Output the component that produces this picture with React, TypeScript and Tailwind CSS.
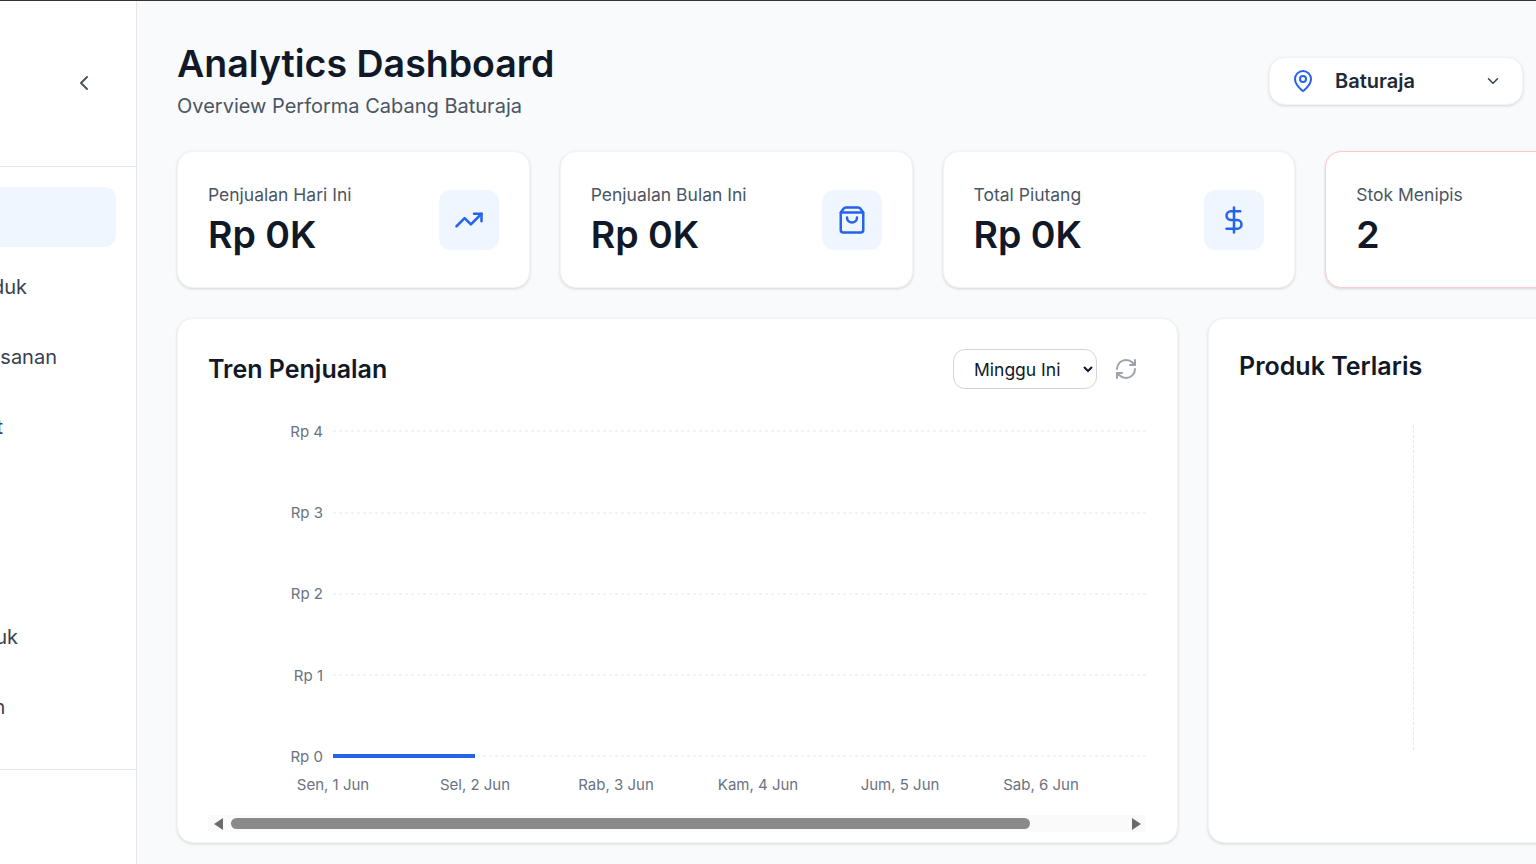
import {
  ChevronDown,
  ChevronLeft,
  DollarSign,
  MapPin,
  RefreshCw,
  ShoppingBag,
  TrendingUp,
} from "lucide-react";
import type { ReactNode } from "react";

function StatCard({
  label,
  value,
  icon,
  alert,
}: {
  label: string;
  value: string;
  icon?: ReactNode;
  alert?: boolean;
}) {
  return (
    <div
      className={`flex h-[137px] w-[352.75px] shrink-0 items-center justify-between rounded-2xl border bg-white px-[30px] shadow-[0_1px_3px_rgba(0,0,0,0.15)] ${
        alert ? "border-red-200" : "border-gray-100"
      }`}
    >
      <div>
        <div className="text-[17.5px] leading-[24px] text-[#4b5563]">{label}</div>
        <div className="mt-[6px] text-[37.5px] leading-[44px] font-semibold text-[#111827]">
          {value}
        </div>
      </div>
      {icon && (
        <div className="flex h-[60px] w-[60px] items-center justify-center rounded-xl bg-[#eff6ff] text-[#2563eb]">
          {icon}
        </div>
      )}
    </div>
  );
}

function NavRow({ label, className }: { label?: string; className?: string }) {
  return (
    <div className="flex h-[60px] shrink-0 items-center">
      {label && (
        <span className={`text-[20px] whitespace-nowrap text-[#374151] ${className}`}>
          {label}
        </span>
      )}
    </div>
  );
}

const yTicks = [
  { y: 11, textY: 16.5, label: "Rp 4" },
  { y: 93, textY: 98, label: "Rp 3" },
  { y: 174, textY: 179, label: "Rp 2" },
  { y: 255, textY: 260.5, label: "Rp 1" },
  { y: 336, textY: 341.5, label: "Rp 0" },
];

const xTicks = [
  { x: 125, label: "Sen, 1 Jun" },
  { x: 267, label: "Sel, 2 Jun" },
  { x: 408, label: "Rab, 3 Jun" },
  { x: 550, label: "Kam, 4 Jun" },
  { x: 692, label: "Jum, 5 Jun" },
  { x: 833, label: "Sab, 6 Jun" },
];

function SalesChart() {
  return (
    <svg width="940" height="385" className="block" fontFamily="Inter, sans-serif">
      {yTicks.map((t) => (
        <g key={t.label}>
          <line x1="125" x2="940" y1={t.y} y2={t.y} stroke="#e5e7eb" strokeDasharray="3 3" />
          <text x="115" y={t.textY} textAnchor="end" fontSize="15" fill="#6b7280">
            {t.label}
          </text>
        </g>
      ))}
      {xTicks.map((t) => (
        <text key={t.label} x={t.x} y="370" textAnchor="middle" fontSize="15" fill="#6b7280">
          {t.label}
        </text>
      ))}
      <line x1="125" x2="267" y1="336" y2="336" stroke="#2563eb" strokeWidth="4" />
    </svg>
  );
}

export default function App() {
  return (
    <div className="flex h-screen w-screen overflow-hidden border-t border-[#333] bg-[#f9fafb] font-['Inter',sans-serif]">
      {/* sidebar is pushed mostly off the left edge */}
      <aside className="flex w-[137px] shrink-0 flex-col overflow-hidden border-r border-gray-200 bg-white">
        <div className="flex h-[166px] shrink-0 items-center justify-end border-b border-gray-200 pr-10 pb-[2px] text-[#4b5563]">
          <ChevronLeft size={24} />
        </div>
        <div className="flex h-[603px] shrink-0 flex-col gap-[10px] border-b border-gray-200 pt-5">
          <div className="mr-5 h-[60px] shrink-0 rounded-r-xl bg-[#eff6ff]" />
          <NavRow label="Produk" className="ml-[-40px]" />
          <NavRow label="Pesanan" className="ml-[-24px]" />
          <NavRow label="Riwayat" className="ml-[-71px]" />
          <NavRow />
          <NavRow />
          <NavRow label="Produk" className="ml-[-49px]" />
          <NavRow label="Laporan" className="ml-[-72px]" />
        </div>
      </aside>

      <main className="flex min-w-0 flex-1 flex-col pt-[40px] pl-10">
        <header className="flex w-[1346px] items-start justify-between">
          <div>
            <h1 className="mt-[1px] text-[37.5px] leading-[44px] font-semibold text-[#111827]">
              Analytics Dashboard
            </h1>
            <p className="mt-[6px] text-[20px] leading-[28px] text-[#4b5563]">
              Overview Performa Cabang Baturaja
            </p>
          </div>
          <div className="mt-[16px] flex h-[48px] w-[254px] items-center rounded-2xl border border-gray-100 bg-white pr-[20px] pl-[21px] shadow-[0_1px_3px_rgba(0,0,0,0.15)]">
            <MapPin size={24} className="text-[#2563eb]" />
            <span className="ml-5 flex-1 text-[20px] font-semibold text-[#1f2937]">Baturaja</span>
            <ChevronDown size={18} className="text-[#374151]" />
          </div>
        </header>

        <section className="mt-[31px] flex gap-[30px]">
          <StatCard label="Penjualan Hari Ini" value="Rp 0K" icon={<TrendingUp size={30} />} />
          <StatCard label="Penjualan Bulan Ini" value="Rp 0K" icon={<ShoppingBag size={30} />} />
          <StatCard label="Total Piutang" value="Rp 0K" icon={<DollarSign size={30} />} />
          <StatCard label="Stok Menipis" value="2" alert />
        </section>

        <section className="mt-[30px] flex gap-[30px]">
          <div className="h-[525px] w-[1001px] shrink-0 rounded-2xl border border-gray-100 bg-white p-[30px] shadow-[0_1px_3px_rgba(0,0,0,0.15)]">
            <div className="flex h-[40px] items-center justify-between pr-[9px]">
              <h2 className="pt-[2px] text-[25px] font-semibold text-[#111827]">Tren Penjualan</h2>
              <div className="flex items-center gap-[17px]">
                <select className="h-[40px] w-[144px] rounded-xl border border-gray-300 bg-white pr-[2px] pl-4 text-[17.5px] text-[#111827]">
                  <option>Minggu Ini</option>
                </select>
                <RefreshCw size={24} className="text-[#9ca3af]" />
              </div>
            </div>
            <div className="mt-[31px]">
              <SalesChart />
            </div>
            <div className="mt-[10px] flex h-[17px] w-[938px] items-center gap-2 bg-[#fafafa] pr-[5px] pl-[6px]">
              <svg width="9" height="12" viewBox="0 0 9 12" className="shrink-0">
                <path d="M9 0v12L0 6z" fill="#6b6b6b" />
              </svg>
              <div className="h-[11px] w-[799px] rounded-full bg-[#8a8a8a]" />
              <svg width="9" height="12" viewBox="0 0 9 12" className="ml-auto shrink-0">
                <path d="M0 0v12l9-6z" fill="#6b6b6b" />
              </svg>
            </div>
          </div>

          <div className="h-[525px] w-[480px] shrink-0 rounded-2xl border border-gray-100 bg-white p-[30px] shadow-[0_1px_3px_rgba(0,0,0,0.15)]">
            <h2 className="mt-[1px] text-[25px] leading-[32px] font-semibold text-[#111827]">Produk Terlaris</h2>
            <div className="mt-[43px] ml-[174px] h-[325px] w-0 border-l border-dashed border-gray-200" />
          </div>
        </section>
      </main>
    </div>
  );
}
